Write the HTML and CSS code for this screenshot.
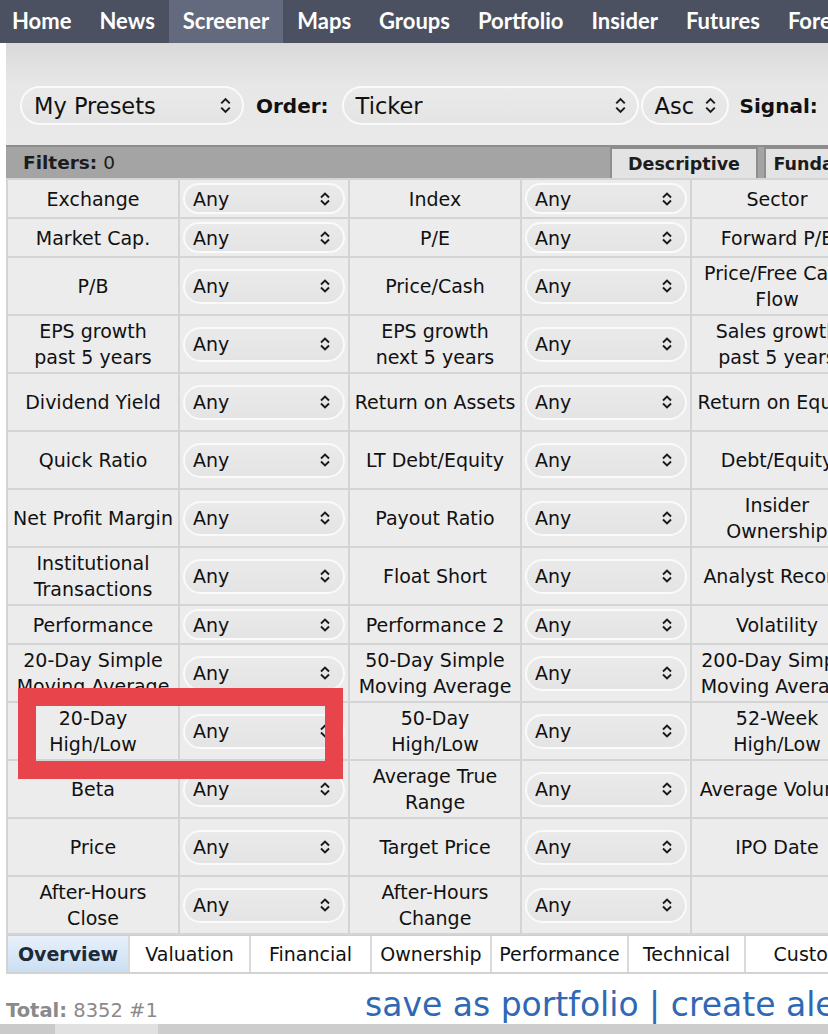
FILE: index.html
```html
<!DOCTYPE html>
<html lang="en">
<head>
    <meta charset="UTF-8">
    <meta name="viewport" content="width=device-width, initial-scale=1.0">
    <title>Screener</title>
    <link rel="stylesheet" href="styles.css">
</head>
<body>
    <nav class="topnav">
        <a href="#">Home</a>
        <a href="#">News</a>
        <a href="#" class="active">Screener</a>
        <a href="#">Maps</a>
        <a href="#">Groups</a>
        <a href="#">Portfolio</a>
        <a href="#">Insider</a>
        <a href="#">Futures</a>
        <a href="#">Forex</a>
        <a href="#">Crypto</a>
    </nav>

    <div class="page">
        <div class="toolbar">
            <div class="pick big presets"><span>My Presets</span><svg viewBox="0 0 12 16"><path d="M2 6 L6 2 L10 6 M2 10 L6 14 L10 10"/></svg></div>
            <b class="tool-label">Order:</b>
            <div class="pick big ticker"><span>Ticker</span><svg viewBox="0 0 12 16"><path d="M2 6 L6 2 L10 6 M2 10 L6 14 L10 10"/></svg></div>
            <div class="pick big asc"><span>Asc</span><svg viewBox="0 0 12 16"><path d="M2 6 L6 2 L10 6 M2 10 L6 14 L10 10"/></svg></div>
            <b class="tool-label">Signal:</b>
        </div>

        <div class="filterbar">
            <span class="filter-count"><b>Filters:</b> 0</span>
            <div class="ftabs">
                <span class="ftab">Descriptive</span>
                <span class="ftab">Fundamental</span>
            </div>
        </div>

        <table class="filters">
            <colgroup>
                <col class="c-label"><col class="c-pick"><col class="c-label"><col class="c-pick"><col class="c-label"><col class="c-pick">
            </colgroup>
            <tbody>
                <tr>
                    <td class="lbl">Exchange</td><td><div class="pick"><span>Any</span><svg viewBox="0 0 12 14"><path d="M2 5.5 L6 1.5 L10 5.5 M2 8.5 L6 12.5 L10 8.5"/></svg></div></td>
                    <td class="lbl">Index</td><td><div class="pick"><span>Any</span><svg viewBox="0 0 12 14"><path d="M2 5.5 L6 1.5 L10 5.5 M2 8.5 L6 12.5 L10 8.5"/></svg></div></td>
                    <td class="lbl">Sector</td><td><div class="pick"><span>Any</span><svg viewBox="0 0 12 14"><path d="M2 5.5 L6 1.5 L10 5.5 M2 8.5 L6 12.5 L10 8.5"/></svg></div></td>
                </tr>
                <tr>
                    <td class="lbl">Market Cap.</td><td><div class="pick"><span>Any</span><svg viewBox="0 0 12 14"><path d="M2 5.5 L6 1.5 L10 5.5 M2 8.5 L6 12.5 L10 8.5"/></svg></div></td>
                    <td class="lbl">P/E</td><td><div class="pick"><span>Any</span><svg viewBox="0 0 12 14"><path d="M2 5.5 L6 1.5 L10 5.5 M2 8.5 L6 12.5 L10 8.5"/></svg></div></td>
                    <td class="lbl">Forward P/E</td><td><div class="pick"><span>Any</span><svg viewBox="0 0 12 14"><path d="M2 5.5 L6 1.5 L10 5.5 M2 8.5 L6 12.5 L10 8.5"/></svg></div></td>
                </tr>
                <tr class="tall">
                    <td class="lbl">P/B</td><td><div class="pick"><span>Any</span><svg viewBox="0 0 12 14"><path d="M2 5.5 L6 1.5 L10 5.5 M2 8.5 L6 12.5 L10 8.5"/></svg></div></td>
                    <td class="lbl">Price/Cash</td><td><div class="pick"><span>Any</span><svg viewBox="0 0 12 14"><path d="M2 5.5 L6 1.5 L10 5.5 M2 8.5 L6 12.5 L10 8.5"/></svg></div></td>
                    <td class="lbl">Price/Free Cash<br>Flow</td><td><div class="pick"><span>Any</span><svg viewBox="0 0 12 14"><path d="M2 5.5 L6 1.5 L10 5.5 M2 8.5 L6 12.5 L10 8.5"/></svg></div></td>
                </tr>
                <tr class="tall">
                    <td class="lbl">EPS growth<br>past 5 years</td><td><div class="pick"><span>Any</span><svg viewBox="0 0 12 14"><path d="M2 5.5 L6 1.5 L10 5.5 M2 8.5 L6 12.5 L10 8.5"/></svg></div></td>
                    <td class="lbl">EPS growth<br>next 5 years</td><td><div class="pick"><span>Any</span><svg viewBox="0 0 12 14"><path d="M2 5.5 L6 1.5 L10 5.5 M2 8.5 L6 12.5 L10 8.5"/></svg></div></td>
                    <td class="lbl">Sales growth<br>past 5 years</td><td><div class="pick"><span>Any</span><svg viewBox="0 0 12 14"><path d="M2 5.5 L6 1.5 L10 5.5 M2 8.5 L6 12.5 L10 8.5"/></svg></div></td>
                </tr>
                <tr class="tall">
                    <td class="lbl">Dividend Yield</td><td><div class="pick"><span>Any</span><svg viewBox="0 0 12 14"><path d="M2 5.5 L6 1.5 L10 5.5 M2 8.5 L6 12.5 L10 8.5"/></svg></div></td>
                    <td class="lbl">Return on Assets</td><td><div class="pick"><span>Any</span><svg viewBox="0 0 12 14"><path d="M2 5.5 L6 1.5 L10 5.5 M2 8.5 L6 12.5 L10 8.5"/></svg></div></td>
                    <td class="lbl">Return on Equity</td><td><div class="pick"><span>Any</span><svg viewBox="0 0 12 14"><path d="M2 5.5 L6 1.5 L10 5.5 M2 8.5 L6 12.5 L10 8.5"/></svg></div></td>
                </tr>
                <tr class="tall">
                    <td class="lbl">Quick Ratio</td><td><div class="pick"><span>Any</span><svg viewBox="0 0 12 14"><path d="M2 5.5 L6 1.5 L10 5.5 M2 8.5 L6 12.5 L10 8.5"/></svg></div></td>
                    <td class="lbl">LT Debt/Equity</td><td><div class="pick"><span>Any</span><svg viewBox="0 0 12 14"><path d="M2 5.5 L6 1.5 L10 5.5 M2 8.5 L6 12.5 L10 8.5"/></svg></div></td>
                    <td class="lbl">Debt/Equity</td><td><div class="pick"><span>Any</span><svg viewBox="0 0 12 14"><path d="M2 5.5 L6 1.5 L10 5.5 M2 8.5 L6 12.5 L10 8.5"/></svg></div></td>
                </tr>
                <tr class="tall">
                    <td class="lbl">Net Profit Margin</td><td><div class="pick"><span>Any</span><svg viewBox="0 0 12 14"><path d="M2 5.5 L6 1.5 L10 5.5 M2 8.5 L6 12.5 L10 8.5"/></svg></div></td>
                    <td class="lbl">Payout Ratio</td><td><div class="pick"><span>Any</span><svg viewBox="0 0 12 14"><path d="M2 5.5 L6 1.5 L10 5.5 M2 8.5 L6 12.5 L10 8.5"/></svg></div></td>
                    <td class="lbl">Insider<br>Ownership</td><td><div class="pick"><span>Any</span><svg viewBox="0 0 12 14"><path d="M2 5.5 L6 1.5 L10 5.5 M2 8.5 L6 12.5 L10 8.5"/></svg></div></td>
                </tr>
                <tr class="tall">
                    <td class="lbl">Institutional<br>Transactions</td><td><div class="pick"><span>Any</span><svg viewBox="0 0 12 14"><path d="M2 5.5 L6 1.5 L10 5.5 M2 8.5 L6 12.5 L10 8.5"/></svg></div></td>
                    <td class="lbl">Float Short</td><td><div class="pick"><span>Any</span><svg viewBox="0 0 12 14"><path d="M2 5.5 L6 1.5 L10 5.5 M2 8.5 L6 12.5 L10 8.5"/></svg></div></td>
                    <td class="lbl">Analyst Recom.</td><td><div class="pick"><span>Any</span><svg viewBox="0 0 12 14"><path d="M2 5.5 L6 1.5 L10 5.5 M2 8.5 L6 12.5 L10 8.5"/></svg></div></td>
                </tr>
                <tr>
                    <td class="lbl">Performance</td><td><div class="pick"><span>Any</span><svg viewBox="0 0 12 14"><path d="M2 5.5 L6 1.5 L10 5.5 M2 8.5 L6 12.5 L10 8.5"/></svg></div></td>
                    <td class="lbl">Performance 2</td><td><div class="pick"><span>Any</span><svg viewBox="0 0 12 14"><path d="M2 5.5 L6 1.5 L10 5.5 M2 8.5 L6 12.5 L10 8.5"/></svg></div></td>
                    <td class="lbl">Volatility</td><td><div class="pick"><span>Any</span><svg viewBox="0 0 12 14"><path d="M2 5.5 L6 1.5 L10 5.5 M2 8.5 L6 12.5 L10 8.5"/></svg></div></td>
                </tr>
                <tr class="tall">
                    <td class="lbl">20-Day Simple<br>Moving Average</td><td><div class="pick"><span>Any</span><svg viewBox="0 0 12 14"><path d="M2 5.5 L6 1.5 L10 5.5 M2 8.5 L6 12.5 L10 8.5"/></svg></div></td>
                    <td class="lbl">50-Day Simple<br>Moving Average</td><td><div class="pick"><span>Any</span><svg viewBox="0 0 12 14"><path d="M2 5.5 L6 1.5 L10 5.5 M2 8.5 L6 12.5 L10 8.5"/></svg></div></td>
                    <td class="lbl">200-Day Simple<br>Moving Average</td><td><div class="pick"><span>Any</span><svg viewBox="0 0 12 14"><path d="M2 5.5 L6 1.5 L10 5.5 M2 8.5 L6 12.5 L10 8.5"/></svg></div></td>
                </tr>
                <tr class="tall">
                    <td class="lbl">20-Day<br>High/Low</td><td><div class="pick"><span>Any</span><svg viewBox="0 0 12 14"><path d="M2 5.5 L6 1.5 L10 5.5 M2 8.5 L6 12.5 L10 8.5"/></svg></div></td>
                    <td class="lbl">50-Day<br>High/Low</td><td><div class="pick"><span>Any</span><svg viewBox="0 0 12 14"><path d="M2 5.5 L6 1.5 L10 5.5 M2 8.5 L6 12.5 L10 8.5"/></svg></div></td>
                    <td class="lbl">52-Week<br>High/Low</td><td><div class="pick"><span>Any</span><svg viewBox="0 0 12 14"><path d="M2 5.5 L6 1.5 L10 5.5 M2 8.5 L6 12.5 L10 8.5"/></svg></div></td>
                </tr>
                <tr class="tall">
                    <td class="lbl">Beta</td><td><div class="pick"><span>Any</span><svg viewBox="0 0 12 14"><path d="M2 5.5 L6 1.5 L10 5.5 M2 8.5 L6 12.5 L10 8.5"/></svg></div></td>
                    <td class="lbl">Average True<br>Range</td><td><div class="pick"><span>Any</span><svg viewBox="0 0 12 14"><path d="M2 5.5 L6 1.5 L10 5.5 M2 8.5 L6 12.5 L10 8.5"/></svg></div></td>
                    <td class="lbl">Average Volume</td><td><div class="pick"><span>Any</span><svg viewBox="0 0 12 14"><path d="M2 5.5 L6 1.5 L10 5.5 M2 8.5 L6 12.5 L10 8.5"/></svg></div></td>
                </tr>
                <tr class="tall">
                    <td class="lbl">Price</td><td><div class="pick"><span>Any</span><svg viewBox="0 0 12 14"><path d="M2 5.5 L6 1.5 L10 5.5 M2 8.5 L6 12.5 L10 8.5"/></svg></div></td>
                    <td class="lbl">Target Price</td><td><div class="pick"><span>Any</span><svg viewBox="0 0 12 14"><path d="M2 5.5 L6 1.5 L10 5.5 M2 8.5 L6 12.5 L10 8.5"/></svg></div></td>
                    <td class="lbl">IPO Date</td><td><div class="pick"><span>Any</span><svg viewBox="0 0 12 14"><path d="M2 5.5 L6 1.5 L10 5.5 M2 8.5 L6 12.5 L10 8.5"/></svg></div></td>
                </tr>
                <tr class="tall">
                    <td class="lbl">After-Hours<br>Close</td><td><div class="pick"><span>Any</span><svg viewBox="0 0 12 14"><path d="M2 5.5 L6 1.5 L10 5.5 M2 8.5 L6 12.5 L10 8.5"/></svg></div></td>
                    <td class="lbl">After-Hours<br>Change</td><td><div class="pick"><span>Any</span><svg viewBox="0 0 12 14"><path d="M2 5.5 L6 1.5 L10 5.5 M2 8.5 L6 12.5 L10 8.5"/></svg></div></td>
                    <td class="lbl"></td><td></td>
                </tr>
            </tbody>
        </table>

        <div class="views">
            <span class="view active">Overview</span>
            <span class="view">Valuation</span>
            <span class="view">Financial</span>
            <span class="view">Ownership</span>
            <span class="view">Performance</span>
            <span class="view">Technical</span>
            <span class="view">Custom</span>
        </div>

        <div class="totals">
            <span class="total"><b>Total:</b> 8352 #1</span>
            <span class="links"><a href="#">save as portfolio</a> | <a href="#">create alert</a></span>
        </div>

        <div class="result-head"><span class="rh-a"></span><span class="rh-b"></span></div>
    </div>

    <div class="mark"></div>
</body>
</html>
```

FILE: styles.css
```css
* {
    margin: 0;
    padding: 0;
    box-sizing: border-box;
}

html, body {
    overflow: hidden;
}

body {
    font-family: 'DejaVu Sans', Verdana, sans-serif;
    background-color: #ffffff;
    color: #111;
    width: 828px;
    height: 1034px;
    position: relative;
}

.topnav {
    display: flex;
    height: 43px;
    padding-left: 0;
    margin-left: -2px;
    background-color: #4b5161;
    white-space: nowrap;
}

.topnav a {
    display: flex;
    align-items: center;
    padding: 0 14px 2px 14px;
    font-family: 'Lato', sans-serif;
    font-weight: 700;
    font-size: 22px;
    color: #ffffff;
    text-decoration: none;
}

.topnav a.active {
    background-color: #646a7d;
}

.page {
    width: 1040px;
    margin-left: 6px;
}

.toolbar {
    display: flex;
    align-items: center;
    height: 102px;
    padding: 43px 0 20px 14px;
    background: linear-gradient(#d9d9d9, #e7e7e7 40%, #e9e9e9);
    white-space: nowrap;
}

.tool-label {
    font-size: 20px;
    color: #111;
}

.pick {
    display: flex;
    align-items: center;
    justify-content: space-between;
    height: 31px;
    margin: 0 3px;
    padding: 0 12px 0 8px;
    border: 2px solid #fafafa;
    border-radius: 17px;
    background: linear-gradient(#eaeaea, #e4e4e4);
    font-size: 19px;
    color: #111;
}

.pick svg {
    width: 12px;
    height: 14px;
    fill: none;
    stroke: #1a1a1a;
    stroke-width: 1.9;
}

.pick.big {
    height: 39px;
    margin: 0;
    border-radius: 20px;
    padding: 0 10px 0 12px;
    font-size: 22.5px;
}

.pick.big svg {
    width: 13px;
    height: 17px;
}

.presets {
    width: 224px;
    margin-right: 12px !important;
}

.ticker {
    width: 297px;
    margin-left: 13px !important;
}

.asc {
    width: 88px;
    margin: 0 11px 0 2px !important;
}

.filterbar {
    display: flex;
    align-items: flex-end;
    height: 33px;
    background-color: #a4a4a4;
    border-top: 2px solid #8c8c8c;
    white-space: nowrap;
}

.filter-count {
    width: 604px;
    padding: 0 0 5px 17px;
    font-size: 18.5px;
    color: #1c1c1c;
}

.ftabs {
    display: flex;
    gap: 6px;
}

.ftab {
    display: block;
    width: 148px;
    height: 31px;
    padding-top: 5px;
    text-align: center;
    font-size: 17.5px;
    font-weight: bold;
    color: #1c1c1c;
    background-color: #e3e3e3;
    border: 2px solid #8e8e8e;
    border-bottom: none;
}

.filters {
    border-collapse: separate;
    border-spacing: 2px;
    background-color: #d4d4d4;
    table-layout: fixed;
    width: 1026px;
}

.c-label {
    width: 170px;
}

.c-pick {
    width: 168px;
}

.filters td {
    height: 37px;
    background-color: #ececec;
    padding: 0;
    vertical-align: middle;
}

.filters tr.tall td {
    height: 56px;
}

.filters tr.tall .pick {
    height: 35px;
    border-radius: 18px;
}

.lbl {
    text-align: center;
    font-size: 19px;
    line-height: 26px;
    padding: 0 2px !important;
    white-space: nowrap;
}

.views {
    display: flex;
    height: 39px;
    border-top: 1px solid #cfcfcf;
    border-bottom: 2px solid #d2d2d2;
    border-left: 2px solid #d2d2d2;
    white-space: nowrap;
}

.view {
    display: flex;
    align-items: center;
    justify-content: center;
    padding: 0 10px;
    font-size: 19px;
    color: #111;
    border-right: 2px solid #dadada;
    background-color: #ffffff;
}

.view.active {
    width: 122px;
    font-weight: bold;
    background: linear-gradient(#e7f0fa, #cbdff2);
    color: #1c2a3a;
}

.views .view:nth-child(2),
.views .view:nth-child(3) {
    width: 121px;
}

.views .view:nth-child(4) {
    width: 120px;
}

.views .view:nth-child(5) {
    width: 137px;
}

.views .view:nth-child(6) {
    width: 117px;
}

.views .view:nth-child(7) {
    width: 130px;
}

.totals {
    display: flex;
    align-items: flex-end;
    height: 50px;
    white-space: nowrap;
}

.total {
    width: 359px;
    padding-bottom: 2px;
    font-size: 19.5px;
    color: #8a8a8a;
}

.links {
    font-size: 33px;
    color: #2f68b4;
    line-height: 38px;
}

.links a {
    color: #2f68b4;
    text-decoration: none;
}

.result-head {
    display: flex;
    height: 14px;
    margin-left: -6px;
    background-color: #cdcdcd;
}

.rh-a {
    width: 55px;
    background-color: #cacaca;
}

.rh-b {
    width: 103px;
    background-color: #e1e1e1;
}

/* red annotation frame drawn over the 20-Day High/Low row */
.mark {
    position: absolute;
    left: 18px;
    top: 688px;
    width: 325px;
    height: 91px;
    border: 18px solid #e8444c;
}
```
